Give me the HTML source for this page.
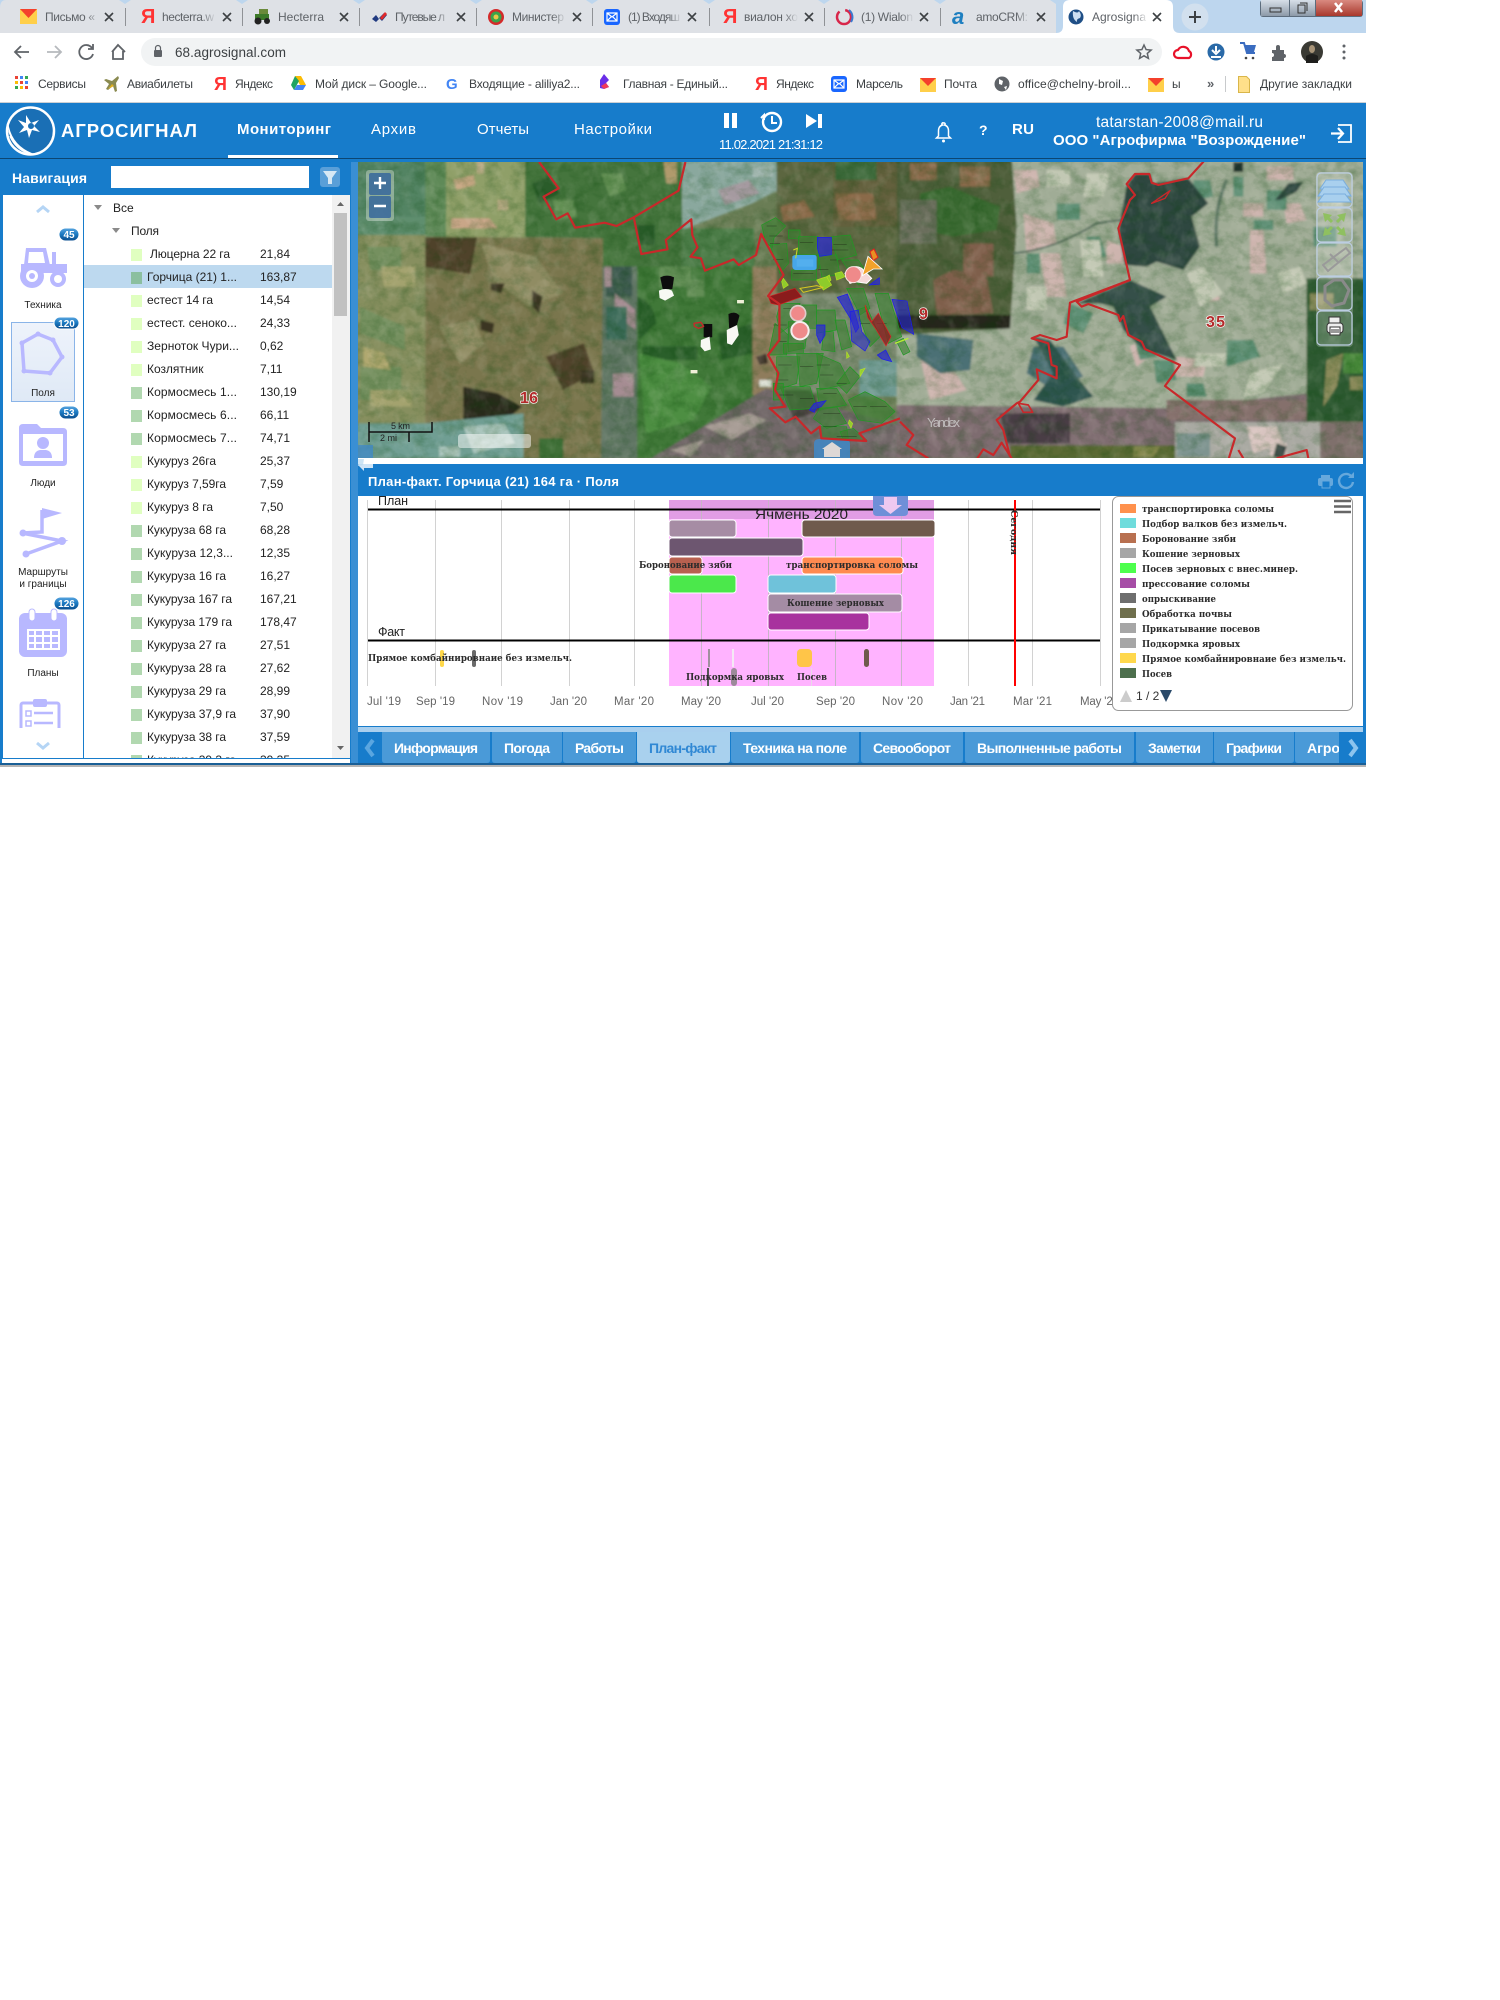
<!DOCTYPE html>
<html lang="ru"><head><meta charset="utf-8"><title>Agrosignal</title>
<style>
html,body{margin:0;padding:0;background:#fff;width:1500px;height:2000px;overflow:hidden}
svg{display:block}
text{font-family:"Liberation Sans","DejaVu Sans",sans-serif;white-space:pre}
.tb{font-size:12px;fill:#5f6368}.bm{font-size:12px;fill:#3c4043}
.nav{font-size:15px;fill:#fff}
.tr{font-size:12px;fill:#222}
.sb{font-size:10px;fill:#222;text-anchor:middle}
.bd{font-size:10px;font-weight:bold;fill:#fff;text-anchor:middle}
.ch{font-family:"DejaVu Serif","Liberation Serif",serif;font-weight:bold;font-size:9.5px;fill:#2b2b2b}
.ax{font-size:11.5px;fill:#666}
.tab{font-size:14px;font-weight:bold;fill:#fff}
.ml{font-family:"Liberation Sans",sans-serif;font-weight:bold;fill:#b32a2a;stroke:#fff;stroke-width:1.3px;paint-order:stroke}
</style></head><body>
<svg xmlns="http://www.w3.org/2000/svg" width="1500" height="2000" viewBox="0 0 1500 2000">
<defs>
<linearGradient id="f1"><stop offset="0" stop-color="#dee1e6" stop-opacity="0"/><stop offset="1" stop-color="#dee1e6"/></linearGradient>
<linearGradient id="f2"><stop offset="0" stop-color="#fff" stop-opacity="0"/><stop offset="1" stop-color="#fff"/></linearGradient>
<linearGradient id="wb" x1="0" y1="0" x2="0" y2="1"><stop offset="0" stop-color="#d7dfe8"/><stop offset="1" stop-color="#8d9aa8"/></linearGradient>
<linearGradient id="wr" x1="0" y1="0" x2="0" y2="1"><stop offset="0" stop-color="#d98a80"/><stop offset="1" stop-color="#a8382c"/></linearGradient>
<linearGradient id="badge" x1="0" y1="0" x2="0" y2="1"><stop offset="0" stop-color="#5aa6e0"/><stop offset=".5" stop-color="#1a78c0"/><stop offset="1" stop-color="#0a4a8a"/></linearGradient>
<linearGradient id="sel" x1="0" y1="0" x2="0" y2="1"><stop offset="0" stop-color="#eef3fb"/><stop offset="1" stop-color="#dfe9f6"/></linearGradient>
<clipPath id="mapc"><rect x="358" y="162" width="1005" height="296"/></clipPath>
<clipPath id="treec"><rect x="84" y="195" width="248" height="563"/></clipPath>
<clipPath id="sidec"><rect x="3" y="195" width="80" height="533"/></clipPath>
<clipPath id="agro"><rect x="1295" y="732" width="44" height="31"/></clipPath>
<filter id="bl" x="-2%" y="-2%" width="104%" height="104%"><feGaussianBlur stdDeviation="1"/></filter>
<filter id="bs"><feGaussianBlur stdDeviation=".4"/></filter>
<filter id="nd" x="0" y="0" width="100%" height="100%"><feTurbulence type="fractalNoise" baseFrequency=".07 .09" numOctaves="4" seed="7"/><feColorMatrix values="0 0 0 0 0 0 0 0 0 .05 0 0 0 0 0 1.8 0 0 0 -.72"/></filter>
<filter id="nl" x="0" y="0" width="100%" height="100%"><feTurbulence type="fractalNoise" baseFrequency=".08 .06" numOctaves="3" seed="21"/><feColorMatrix values="0 0 0 0 1 0 0 0 0 .92 0 0 0 0 .85 1.9 0 0 0 -.85"/></filter>
</defs>

<rect width="1500" height="2000" fill="#fff"/>

<!-- Chrome title + tab strip -->
<rect width="1366" height="33" fill="#bdd6ee"/>
<rect x="0" y="0" width="1056" height="33" fill="#dee1e6"/>
<path d="M0 0h6q-6 0-6 8z" fill="#bdd6ee"/>
<g fill="#bdd6ee"><path d="M119 0h12l-6 4zM236 0h12l-6 4zM353 0h12l-6 4zM470 0h12l-6 4zM586 0h12l-6 4zM703 0h12l-6 4zM818 0h12l-6 4zM934 0h12l-6 4zM1050 0h12l-6 4z"/></g>
<path d="M1056 33q7 0 7-7V7q0-7 7-7h96q7 0 7 7v19q0 7 7 7z" fill="#fff"/>
<g stroke="#8f9296" stroke-width="1"><path d="M125.500 8v18M242.500 8v18M359.500 8v18M476.500 8v18M592.500 8v18M709.500 8v18M824.500 8v18M940.500 8v18"/></g>
<circle cx="1195" cy="17" r="13.500" fill="#d2e0ee"/>
<path d="M1195 11v12M1189 17h12" stroke="#3c4043" stroke-width="2"/>
<!-- tab icons -->
<rect x="20" y="9" width="17" height="15" fill="#ffcf4a"/><path d="M20 9h17l-8.500 9z" fill="#f4402c"/>
<text x="141" y="23" font-size="20" fill="#f33" font-weight="bold">Я</text>
<g><rect x="259" y="9" width="9" height="7" fill="#6a8a3a"/><rect x="255" y="14" width="14" height="6" fill="#3d7a2a"/><circle cx="258" cy="21" r="3.500" fill="#222"/><circle cx="267" cy="21" r="3" fill="#222"/></g>
<path d="M372 19l4-4 3 4-3 3zM379 18l5-5 3 2-5 6z" fill="#203a80"/><path d="M380 18l5-6 2 2-5 6z" fill="#e22a2a"/>
<circle cx="496" cy="17" r="8" fill="#d42a2a"/><circle cx="496" cy="17" r="5.500" fill="#3aa34a"/><circle cx="496" cy="17" r="2.500" fill="#e6c84a"/>
<rect x="604" y="9" width="16" height="16" rx="3" fill="#1966ff"/><path d="M607 13h10v8h-10zM607 13l5 4 5-4M607 21l4-4M617 21l-4-4" fill="none" stroke="#fff" stroke-width="1.200"/>
<text x="723" y="23" font-size="20" fill="#f33" font-weight="bold">Я</text>
<circle cx="844" cy="17" r="7" fill="none" stroke="#d8264a" stroke-width="2.500" stroke-dasharray="28 6"/><path d="M849 10a9 9 0 0 1 2 12" stroke="#3a7ad0" stroke-width="2" fill="none"/>
<text x="952" y="24" font-size="22" fill="#1e7fc0" font-weight="bold" font-style="italic" font-family="Liberation Serif">a</text>
<circle cx="1076" cy="17" r="7.500" fill="#1f4f86"/><path d="M1073 11q5 3 6 0 3 4 1 7-4 1-3 4-5-3-4-11z" fill="#cfe0f2"/>
<!-- tab text -->
<g class="tb">
<text x="45" y="21" textLength="50">Письмо «</text>
<text x="162" y="21" textLength="52">hecterra.w</text>
<text x="278" y="21" textLength="46">Hecterra</text>
<text x="395" y="21" textLength="50">Путевые л</text>
<text x="512" y="21" textLength="52">Министер</text>
<text x="628" y="21" textLength="52">(1) Входяш</text>
<text x="744" y="21" textLength="54">виалон хо</text>
<text x="861" y="21" textLength="52">(1) Wialon</text>
<text x="976" y="21" textLength="52">amoCRM:</text>
<text x="1092" y="21" textLength="54">Agrosigna</text>
</g>
<g fill="url(#f1)"><rect x="86" y="8" width="14" height="18"/><rect x="202" y="8" width="14" height="18"/><rect x="436" y="8" width="14" height="18"/><rect x="552" y="8" width="14" height="18"/><rect x="668" y="8" width="14" height="18"/><rect x="784" y="8" width="14" height="18"/><rect x="900" y="8" width="14" height="18"/><rect x="1016" y="8" width="14" height="18"/></g>
<rect x="1134" y="8" width="14" height="18" fill="url(#f2)"/>
<g stroke="#3c4043" stroke-width="1.600" fill="none"><path d="M105 13l8 8M113 13l-8 8M223 13l8 8M231 13l-8 8M340 13l8 8M348 13l-8 8M457 13l8 8M465 13l-8 8M573 13l8 8M581 13l-8 8M688 13l8 8M696 13l-8 8M805 13l8 8M813 13l-8 8M920 13l8 8M928 13l-8 8M1037 13l8 8M1045 13l-8 8M1153 13l8 8M1161 13l-8 8"/></g>
<!-- window buttons -->
<rect x="1260" y="0" width="103" height="17" rx="3" fill="#5c6c7c"/>
<rect x="1261" y="0" width="28" height="16" fill="url(#wb)"/><rect x="1290" y="0" width="25" height="16" fill="url(#wb)"/><rect x="1316" y="0" width="46" height="16" fill="url(#wr)"/>
<rect x="1270" y="8" width="11" height="4" fill="none" stroke="#333" stroke-width="1"/>
<path d="M1298 5h7v8h-7zM1300 3h7v8" fill="none" stroke="#333" stroke-width="1"/>
<path d="M1335 3l7 9M1342 3l-7 9" stroke="#fff" stroke-width="2.500"/>

<!-- Toolbar -->
<rect x="141" y="38" width="1021" height="28" rx="14" fill="#f1f3f4"/>
<g stroke="#5f6368" stroke-width="1.800" fill="none">
<path d="M29 52H15M21 46l-6 6 6 6"/>
<path d="M47 52h14M55 46l6 6-6 6" stroke="#b6b9bd"/>
<path d="M92 48a7 7 0 1 0 1 6M93 44v5h-5"/>
<path d="M112 52l6-7 7 7M113 51v8h10v-8"/>
</g>
<rect x="154" y="50" width="8" height="7" rx="1" fill="#5f6368"/><path d="M155.500 50v-2a2.500 2.500 0 0 1 5 0v2" fill="none" stroke="#5f6368" stroke-width="1.200"/>
<text x="175" y="57" font-size="13.500" fill="#3c4043" textLength="111">68.agrosignal.com</text>
<path d="M1144 45l2.100 4.600 5 .5-3.800 3.300 1.100 5-4.400-2.600-4.400 2.600 1.100-5-3.800-3.300 5-.5z" fill="none" stroke="#5f6368" stroke-width="1.500"/>
<path d="M1178 58a4 4 0 0 1 0-8 6 6 0 0 1 11 1 4 4 0 0 1 0 7z" fill="none" stroke="#e8122a" stroke-width="2.200"/>
<circle cx="1216" cy="52" r="8.500" fill="#2a6aa8"/><path d="M1216 46v6M1212 50l4 4 4-4M1211 57h10" stroke="#fff" stroke-width="2" fill="none"/>
<path d="M1240 43h4l3 10h8" stroke="#3a6cc0" stroke-width="2" fill="none"/><path d="M1244 45h12l-2 7h-8z" fill="#3a6cc0"/><circle cx="1246" cy="58" r="1.300" fill="#444"/><circle cx="1253" cy="58" r="1.300" fill="#444"/>
<path d="M1272 50h4v-3a2 2 0 0 1 4 0v3h4v4a2 2 0 0 1 0 4v3h-12v-4a2 2 0 0 0 0-4z" fill="#5f6368"/>
<ellipse cx="1312" cy="52" rx="11" ry="11" fill="#3a3a34"/><ellipse cx="1312" cy="49" rx="3" ry="4" fill="#a89478"/><path d="M1306 63v-7q6-4 12 0v7z" fill="#1e1e1c"/>
<g fill="#5f6368"><circle cx="1344" cy="46" r="1.500"/><circle cx="1344" cy="52" r="1.500"/><circle cx="1344" cy="58" r="1.500"/></g>

<!-- Bookmarks -->
<g>
<g><rect x="15" y="76" width="3" height="3" fill="#ea4335"/><rect x="20" y="76" width="3" height="3" fill="#4285f4"/><rect x="25" y="76" width="3" height="3" fill="#34a853"/><rect x="15" y="81" width="3" height="3" fill="#fbbc05"/><rect x="20" y="81" width="3" height="3" fill="#ea4335"/><rect x="25" y="81" width="3" height="3" fill="#4285f4"/><rect x="15" y="86" width="3" height="3" fill="#34a853"/><rect x="20" y="86" width="3" height="3" fill="#fbbc05"/><rect x="25" y="86" width="3" height="3" fill="#ea4335"/></g>
<text class="bm" x="38" y="88" textLength="48">Сервисы</text>
<path d="M118 76l-6 5-6-2-2 1 5 4-3 5 2 1 5-4 2 6 2-1-1-8 3-5z" fill="#8a8a50"/><path d="M108 89l4-5 2 2z" fill="#e0b020"/>
<text class="bm" x="127" y="88" textLength="66">Авиабилеты</text>
<text x="214" y="90" font-size="18" fill="#f33" font-weight="bold">Я</text>
<text class="bm" x="235" y="88" textLength="38">Яндекс</text>
<path d="M295 76h6l5 9h-6z" fill="#fbbc05"/><path d="M295 76l-4 9 3 5 5-9z" fill="#1fa463"/><path d="M294 90h9l3-5h-9z" fill="#4285f4"/>
<text class="bm" x="315" y="88" textLength="112">Мой диск – Google...</text>
<text x="446" y="89" font-size="15" font-weight="bold" fill="#4285f4">G</text>
<text class="bm" x="469" y="88" textLength="111">Входящие - aliliya2...</text>
<path d="M604 74l5 6-3 3 3 4-5 2-4-1v-8z" fill="#6a2ee8"/><path d="M601 86l5-3 3 4-5 2z" fill="#f03a5a"/>
<text class="bm" x="623" y="88" textLength="105">Главная - Единый...</text>
<text x="755" y="90" font-size="18" fill="#f33" font-weight="bold">Я</text>
<text class="bm" x="776" y="88" textLength="38">Яндекс</text>
<rect x="831" y="76" width="16" height="16" rx="3" fill="#1966ff"/><path d="M834 80h10v8h-10zM834 80l5 4 5-4M834 88l4-4M844 88l-4-4" fill="none" stroke="#fff" stroke-width="1.200"/>
<text class="bm" x="856" y="88" textLength="47">Марсель</text>
<rect x="920" y="78" width="16" height="14" fill="#ffcf4a"/><path d="M920 78h16l-8 8z" fill="#f4402c"/>
<text class="bm" x="944" y="88" textLength="33">Почта</text>
<circle cx="1002" cy="84" r="7.500" fill="#5f6368"/><path d="M999 79l4 2-1 4-3-1zM1004 87l3-1-1 4z" fill="#fff"/>
<text class="bm" x="1018" y="88" textLength="113">office@chelny-broil...</text>
<rect x="1148" y="78" width="16" height="14" fill="#ffcf4a"/><path d="M1148 78h16l-8 8z" fill="#f4402c"/>
<text class="bm" x="1172" y="88" textLength="8">ы</text>
<text x="1207" y="88" font-size="13" font-weight="bold" fill="#5f6368">»</text>
<rect x="1225" y="76" width="1" height="16" fill="#c8cacc"/>
<path d="M1238.500 76.500h8l3 3v13h-11z" fill="#ffe08a" stroke="#d9b64a"/>
<text class="bm" x="1260" y="88" textLength="92">Другие закладки</text>
</g>
<rect y="102" width="1366" height="1" fill="#ccd0d4"/>

<!-- App blue base -->
<rect x="0" y="103" width="1366" height="662" fill="#177ccb"/>
<rect x="0" y="158" width="1366" height="1" fill="#0c4672"/>
<!-- logo -->
<circle cx="30.500" cy="131" r="23.500" fill="#1a6fb5" stroke="#fff" stroke-width="2.500"/>
<path d="M8 126q4 20 24 28M10 136q6 13 18 17M9 131q5 16 21 23" stroke="#fff" stroke-width="1.600" fill="none"/>
<path d="M26 115l5 8 8-3-5 6 6 6-8-2-3 8-2-8-8 3 5-6-6-7 8 3z" fill="#fff"/><circle cx="31" cy="126" r="3" fill="#1a6fb5"/>
<text x="61" y="137" font-size="18.500" font-weight="bold" fill="#fff" textLength="136">АГРОСИГНАЛ</text>
<text class="nav" x="237" y="134" font-weight="bold" textLength="94">Мониторинг</text>
<rect x="228" y="155" width="110" height="3" fill="#fff"/>
<text class="nav" x="371" y="134" textLength="45">Архив</text>
<text class="nav" x="477" y="134" textLength="52">Отчеты</text>
<text class="nav" x="574" y="134" textLength="78">Настройки</text>
<!-- player -->
<rect x="724" y="113" width="5" height="15" fill="#fff"/><rect x="732" y="113" width="5" height="15" fill="#fff"/>
<circle cx="772" cy="122" r="9" fill="none" stroke="#fff" stroke-width="2.400"/><path d="M772 116v7h5M761 118l3-3v5" stroke="#fff" stroke-width="2" fill="none"/>
<path d="M806 114l11 7-11 7z" fill="#fff"/><rect x="818" y="114" width="4" height="14" fill="#fff"/>
<text x="719" y="149" font-size="13" fill="#fff" textLength="104">11.02.2021 21:31:12</text>
<path d="M943.500 123a1 1 0 0 1 1 2q4 1 4 6v5l2 2h-14l2-2v-5q0-5 4-6a1 1 0 0 1 1-2z" fill="none" stroke="#fff" stroke-width="1.500"/><circle cx="943.500" cy="141" r="1.500" fill="#fff"/>
<text x="979" y="135" font-size="14" font-weight="bold" fill="#fff">?</text>
<text x="1012" y="134" font-size="15" font-weight="bold" fill="#fff" textLength="22">RU</text>
<text x="1096" y="127" font-size="15.500" fill="#fff" textLength="167">tatarstan-2008@mail.ru</text>
<text x="1053" y="145" font-size="15" font-weight="bold" fill="#fff" textLength="253">ООО "Агрофирма "Возрождение"</text>
<path d="M1338 125h13v17h-13" fill="none" stroke="#fff" stroke-width="1.800"/><path d="M1331 133.500h11M1338 128l5 5.500-5 5.500" fill="none" stroke="#fff" stroke-width="2.200"/>

<!-- Sidebar -->
<text x="12" y="183" font-size="14" font-weight="bold" fill="#fff" textLength="75">Навигация</text>
<rect x="111" y="166" width="198" height="22" fill="#fff"/>
<rect x="320" y="167" width="20" height="20" rx="3" fill="#5a9fd8"/><path d="M323 171h14l-5 7v6h-4v-6z" fill="#d8e8f4"/>
<rect x="3" y="195" width="347" height="563" fill="#fff"/>
<rect x="83" y="195" width="1" height="563" fill="#177ccb"/>
<rect x="351" y="162" width="7" height="603" fill="#3a8fd4"/>
<rect x="3" y="758" width="347" height="1" fill="#177ccb"/>
<rect x="2" y="759" width="348" height="5" fill="#fff"/>

<path d="M37 212l6-5 6 5" fill="none" stroke="#b5d5f5" stroke-width="3"/>
<g clip-path="url(#sidec)">
<!-- tractor -->
<g fill="#b8b8ff">
<path d="M26 248h20l4 17h-26z"/><rect x="52" y="252" width="4" height="14"/>
<path d="M21 264h46v9H21z"/>
</g>
<path d="M29 252h14l2 11H28z" fill="#fff"/>
<circle cx="32" cy="276" r="12" fill="#b8b8ff"/><circle cx="32" cy="276" r="6" fill="#fff"/><circle cx="32" cy="276" r="3" fill="#b8b8ff"/>
<circle cx="58" cy="279" r="8" fill="#b8b8ff"/><circle cx="58" cy="279" r="4" fill="#fff"/>
<text class="sb" x="43" y="308">Техника</text>
<!-- fields -->
<rect x="11.500" y="322.500" width="63" height="79" fill="url(#sel)" stroke="#8ab4e8"/>
<path d="M22 343l16-9 15 6 9 17-12 16-26-2z" fill="none" stroke="#b8b8ff" stroke-width="3.500"/>
<g fill="#b8b8ff"><circle cx="22" cy="343" r="2.500"/><circle cx="38" cy="334" r="2.500"/><circle cx="53" cy="340" r="2.500"/><circle cx="62" cy="357" r="2.500"/><circle cx="50" cy="373" r="2.500"/><circle cx="24" cy="371" r="2.500"/></g>
<text class="sb" x="43" y="396">Поля</text>
<!-- people -->
<path d="M19 428q0-4 4-4h14l4 4h22q4 0 4 4v30q0 4-4 4H23q-4 0-4-4z" fill="#b8b8ff"/>
<path d="M23 434h40v27H23z" fill="#fff"/>
<circle cx="43" cy="443" r="6" fill="#b8b8ff"/><path d="M34 458q0-7 6-8h6q6 1 6 8z" fill="#b8b8ff"/>
<text class="sb" x="43" y="486">Люди</text>
<!-- routes -->
<path d="M42 510v22L22 533l40 8-36 13" fill="none" stroke="#b8b8ff" stroke-width="3.500"/>
<path d="M42 508l20 5-20 6z" fill="#b8b8ff"/>
<circle cx="23" cy="533" r="3.500" fill="#b8b8ff"/><circle cx="62" cy="541" r="4" fill="#b8b8ff"/><circle cx="26" cy="554" r="3.500" fill="#b8b8ff"/>
<text class="sb" x="43" y="575">Маршруты</text>
<text class="sb" x="43" y="587">и границы</text>
<!-- calendar -->
<rect x="19" y="613" width="48" height="44" rx="6" fill="#b8b8ff"/>
<rect x="29" y="609" width="6" height="12" rx="3" fill="#fff" stroke="#b8b8ff"/><rect x="51" y="609" width="6" height="12" rx="3" fill="#fff" stroke="#b8b8ff"/>
<path d="M28 630h31v19H28z M28 636h31M28 643h31M35 630v19M43 630v19M51 630v19" fill="none" stroke="#fff" stroke-width="2"/>
<text class="sb" x="43" y="676">Планы</text>
<!-- clipboard -->
<rect x="21" y="703" width="38" height="30" rx="2" fill="none" stroke="#b8b8ff" stroke-width="3"/><rect x="33" y="699" width="14" height="8" rx="2" fill="#b8b8ff"/>
<path d="M26 711h5v5h-5zM26 721h5v5h-5z" fill="none" stroke="#b8b8ff" stroke-width="1.500"/><path d="M34 713h19M34 723h19" stroke="#b8b8ff" stroke-width="2.500"/>
</g>
<path d="M37 743l6 5 6-5" fill="none" stroke="#b5d5f5" stroke-width="3"/>
<!-- badges -->
<g>
<rect x="59" y="228" width="20" height="13" rx="6.500" fill="url(#badge)" stroke="#fff"/><text class="bd" x="69" y="238">45</text>
<rect x="54" y="317" width="25" height="12" rx="6" fill="url(#badge)" stroke="#fff"/><text class="bd" x="66.500" y="327">120</text>
<rect x="59" y="406" width="20" height="13" rx="6.500" fill="url(#badge)" stroke="#fff"/><text class="bd" x="69" y="416">53</text>
<rect x="54" y="597" width="25" height="13" rx="6.500" fill="url(#badge)" stroke="#fff"/><text class="bd" x="66.500" y="607">126</text>
</g>

<!-- Tree -->
<rect x="84" y="265" width="248" height="23" fill="#bdd9ef"/>
<path d="M94 205h8l-4 5z M112 228h8l-4 5z" fill="#8a8a8a"/>
<rect x="332" y="195" width="18" height="563" fill="#f1f1f1"/>
<rect x="334" y="213" width="13" height="103" fill="#c1c1c1"/>
<path d="M337 206l3.500-4 3.500 4z M337 746l3.500 4 3.500-4z" fill="#666"/>
<g clip-path="url(#treec)">
<g class="tr">
<text x="113" y="212">Все</text><text x="131" y="235" textLength="28">Поля</text>
<text x="150" y="258" textLength="80">Люцерна 22 га</text><text x="260" y="258">21,84</text>
<text x="147" y="281" textLength="90">Горчица (21) 1...</text><text x="260" y="281">163,87</text>
<text x="147" y="304" textLength="66">естест 14 га</text><text x="260" y="304">14,54</text>
<text x="147" y="327" textLength="90">естест. сеноко...</text><text x="260" y="327">24,33</text>
<text x="147" y="350" textLength="92">Зерноток Чури...</text><text x="260" y="350">0,62</text>
<text x="147" y="373">Козлятник</text><text x="260" y="373">7,11</text>
<text x="147" y="396" textLength="90">Кормосмесь 1...</text><text x="260" y="396">130,19</text>
<text x="147" y="419" textLength="90">Кормосмесь 6...</text><text x="260" y="419">66,11</text>
<text x="147" y="442" textLength="90">Кормосмесь 7...</text><text x="260" y="442">74,71</text>
<text x="147" y="465" textLength="69">Кукуруз 26га</text><text x="260" y="465">25,37</text>
<text x="147" y="488" textLength="79">Кукуруз 7,59га</text><text x="260" y="488">7,59</text>
<text x="147" y="511" textLength="66">Кукуруз 8 га</text><text x="260" y="511">7,50</text>
<text x="147" y="534" textLength="79">Кукуруза 68 га</text><text x="260" y="534">68,28</text>
<text x="147" y="557" textLength="86">Кукуруза 12,3...</text><text x="260" y="557">12,35</text>
<text x="147" y="580" textLength="79">Кукуруза 16 га</text><text x="260" y="580">16,27</text>
<text x="147" y="603" textLength="85">Кукуруза 167 га</text><text x="260" y="603">167,21</text>
<text x="147" y="626" textLength="85">Кукуруза 179 га</text><text x="260" y="626">178,47</text>
<text x="147" y="649" textLength="79">Кукуруза 27 га</text><text x="260" y="649">27,51</text>
<text x="147" y="672" textLength="79">Кукуруза 28 га</text><text x="260" y="672">27,62</text>
<text x="147" y="695" textLength="79">Кукуруза 29 га</text><text x="260" y="695">28,99</text>
<text x="147" y="718" textLength="89">Кукуруза 37,9 га</text><text x="260" y="718">37,90</text>
<text x="147" y="741" textLength="79">Кукуруза 38 га</text><text x="260" y="741">37,59</text>
<text x="147" y="764" textLength="89">Кукуруза 39,3 га</text><text x="260" y="764">39,35</text>
</g>
<g fill="#e0ffc0"><rect x="131" y="249" width="11" height="12"/><rect x="131" y="295" width="11" height="12"/><rect x="131" y="318" width="11" height="12"/><rect x="131" y="341" width="11" height="12"/><rect x="131" y="364" width="11" height="12"/><rect x="131" y="456" width="11" height="12"/><rect x="131" y="479" width="11" height="12"/><rect x="131" y="502" width="11" height="12"/></g>
<rect x="131" y="272" width="11" height="12" fill="#8bbf9f"/>
<g fill="#b1d8b0"><rect x="131" y="387" width="11" height="12"/><rect x="131" y="410" width="11" height="12"/><rect x="131" y="433" width="11" height="12"/><rect x="131" y="525" width="11" height="12"/><rect x="131" y="548" width="11" height="12"/><rect x="131" y="571" width="11" height="12"/><rect x="131" y="594" width="11" height="12"/><rect x="131" y="617" width="11" height="12"/><rect x="131" y="640" width="11" height="12"/><rect x="131" y="663" width="11" height="12"/><rect x="131" y="686" width="11" height="12"/><rect x="131" y="709" width="11" height="12"/><rect x="131" y="732" width="11" height="12"/><rect x="131" y="755" width="11" height="12"/></g>
</g>

<!-- MAP -->
<g clip-path="url(#mapc)">
<rect x="358" y="162" width="1005" height="296" fill="#6a7d55"/>
<g filter="url(#bl)">
<g transform="translate(360 160) scale(.34435 .33333)">
<rect x="-10" y="0" width="200" height="230" fill="#528464"/>
<rect x="-10" y="170" width="200" height="60" fill="#5e8e6e"/>
<rect x="190" y="0" width="290" height="232" fill="#8f9f68"/>
<rect x="190" y="0" width="60" height="232" fill="#5e8a58"/>
<path d="M270 60l60-15 5 30-55 15z" fill="#c8a884"/><path d="M265 175h110l25 30H265z" fill="#c9a688"/><path d="M340 0h20v40h-20zM400 120h30v30h-30z" fill="#c0ae88"/>
<path d="M480 0H945V320H705V235L480 230z" fill="#44753c"/>
<path d="M500 70l50-20 30 50-60 30z" fill="#2c5c2a"/><path d="M700 40h60l15 50-50 20zM560 120h60l10 50-60 10z" fill="#628f52"/><path d="M805 195h50v60h-45z" fill="#2a5c2c"/><path d="M880 0h40v70h-30z" fill="#b09a6c"/>
<path d="M935 0H1215V90L1140 130 935 210z" fill="#8aa89e"/><path d="M1040 90l90-30 30 40-100 35z" fill="#a59aa0"/><rect x="1140" y="20" width="60" height="30" fill="#a9bcb8"/>
<rect x="935" y="205" width="210" height="120" fill="#4c7c46"/>
<rect x="-10" y="225" width="200" height="570" fill="#878f5e"/>
<path d="M0 440l130 60v70l-130-50zM20 260h100v70H30zM0 620h120v100H0z" fill="#75905e"/><path d="M10 560l60 20 20 50-80-10z" fill="#b0a870"/><path d="M60 320h100v60H70zM30 690h120v50H30z" fill="#a3a26e"/>
<path d="M190 230L705 235V895H475V760L190 790z" fill="#7a764e"/>
<path d="M190 232h150l-20 110-130-20zM540 590l110-40 30 90-90 50z" fill="#4f432b"/>
<path d="M300 680l100 20 70 40-40 35-130 10z" fill="#2c2a1c"/>
<path d="M350 250l160 40 80 110-100 40-100-80zM230 500l100-20 30 70-70 60z" fill="#908c63"/>
<path d="M350 480l40 10-5 30-35-10zM380 370h40l-10 30-30-10zM500 390l30 20-10 50-20-20zM640 630h40v40h-40z" fill="#3a3620"/>
<path d="M705 320h100v575H700z" fill="#5f7464"/><path d="M715 320h75v90h-75z" fill="#3c5a50"/><path d="M740 400l60 50v60l-60-50zM735 640h60v70h-60zM710 320h20v60h-20z" fill="#a58c92"/><path d="M715 440h60v100h-60z" fill="#3e6c5a"/>
<path d="M805 320H1145V720L850 895H805z" fill="#407838"/><path d="M805 410q50 20 55 80l-50 50zM1040 520l100-30v90l-90 20zM820 560h160v40H820z" fill="#2a5e2c"/><path d="M810 580l120 30 90 70-50 100-140 40z" fill="#4e8e42"/><path d="M870 320h90v60h-90zM950 360h50v50h-50z" fill="#628e54"/>
<path d="M1150 590l30-10 5 30-25 5z" fill="#3a3028"/>
<rect x="1140" y="320" width="75" height="385" fill="#8f7b5c"/>
<path d="M1150 590l30-10 5 30-25 5z" fill="#3a3028"/><path d="M1160 660h35v20h-35z" fill="#ecebe4"/>
<rect x="1210" y="0" width="370" height="410" fill="#5c663f"/><path d="M1375 0h190v200h-190z" fill="#64603c"/><path d="M1380 100h110l10 80h-110zM1220 140l70-20 30 50-90 15z" fill="#8a6a48"/><path d="M1380 0h120v60h-120z" fill="#3c6a3a"/>
<rect x="1210" y="400" width="370" height="300" fill="#7c8a70"/>
<path d="M1450 600h130v110h-130z" fill="#6f9a92"/>
<path d="M845 895L1180 685 1580 800V895z" fill="#726769"/><path d="M1000 800l130-40 50 20-100 60zM900 870l100-30-40 50z" fill="#a39891"/><path d="M1230 690h80l30 60-80 30z" fill="#48423f"/>
<path d="M-10 790H190L475 760V895H-10z" fill="#6f9e93"/><path d="M300 800l120-10 30 60-120 30zM230 860h60v30h-60z" fill="#aac5bd"/><path d="M520 835h70v60h-70z" fill="#3f7038"/>
</g>
<g transform="translate(900 160)">
<g transform="scale(.33333)">
<path d="M-10 0H375L350 200 330 505-10 525z" fill="#505e3a"/>
<path d="M60 100l90-20 150 60-10 70-130 20-100-20z" fill="#3a6a30"/><path d="M0 120h110v130H0z" fill="#6b6e5c"/><path d="M100 360l60-30 100 20 20 110-170 5zM190 250h90v100h-90z" fill="#7f5f4c"/><path d="M30 10h80v50H30zM180 20h90v60h-90z" fill="#8a6a4c"/>
<rect x="-10" y="465" width="345" height="42" fill="#26261e"/>
<path d="M335 0H1395V355H1220V740L820 750 650 760 340 740-10 735V525L330 505 350 200z" fill="#a0ac96"/>
<g fill="#cdb4ae"><path d="M370 160l90 30 10 60-90 30zM420 280h60l20 130h-60zM1050 210h40l10 130h-50zM880 360h60l20 60-60 10zM1030 130h60v40h-60zM1100 20h80v40h-80zM690 560l60-40 20 50-60 50zM620 240l50 20 10 50-60 0zM60 590l100 40 40 60-110 30zM340 30h70l10 50-70 20zM830 590l90 10-10 50-90 0zM1150 130h50l20 50-60 10z"/></g>
<g fill="#5f9076"><path d="M380 280h40v60h-40zM510 430l70 30-30 60-60-30zM560 230h40l20 60-60 10zM1060 180h60v30h-60zM1000 50h30v60h-30zM1100 90h60v60h-60zM700 530h50l20 60-50 10zM980 540h80l20 50-100 30zM760 600h60l10 60-60 10zM860 670h50l10 40h-60zM470 130h70v50h-70zM880 60h50l10 50-60 10zM1240 200h70v60h-70z"/></g>
<g fill="#c2c8b4"><path d="M560 40h70l-20 70h-60zM440 30h70v50h-70zM860 340l50-20 60 80-70 40zM380 380h60v70h-60zM1130 340l70-20 20 50-70 30zM890 580h90l-10 40h-90zM1050 640l100-30-60 90-60 10zM540 240h60l10 110h-60zM1260 60h60l10 90h-60z"/></g>
<path d="M400 560h90l60 90-90 40-80-50zM50 520l170 20-10 90-90 10-70-50z" fill="#4c7074"/>
<path d="M-10 735L820 745 1220 700V790H825V858H330V895H-10z" fill="#7e6c70"/>
<path d="M300 760l210 0v90H320z" fill="#4a3e45"/><path d="M800 720h420v60H800z" fill="#85706c"/>
<path d="M330 856H825V895H330z" fill="#5c6a35"/><path d="M700 860h80l-20 30h-60z" fill="#8a8a50"/>
<path d="M825 786H1260V895H825z" fill="#a9a9a2"/><path d="M1040 800l90 0 20 50-90 30zM1110 850h50v40h-50z" fill="#d8c4c0"/><path d="M1130 850l30 10-10 35-30-5z" fill="#3a4a44"/><path d="M830 820h100v70H830z" fill="#7e9490"/>
<rect x="1260" y="786" width="135" height="110" fill="#7f6f6c"/>
<rect x="1220" y="355" width="175" height="430" fill="#2f5a30"/><path d="M1280 600l50-20-20 100-40 60zM1350 650h40v40h-40zM1230 400h70v50h-70z" fill="#8a8a5a"/><path d="M1330 580h60v60h-60z" fill="#4a8a3a"/>
<path d="M680 75l25-33 45 0 10 28 105-15 60 75-50 40 25 90-50 70-80-25-30 15-65-5-20-100z" fill="#2f4740"/>
<path d="M530 430l160-70 110 50-50 30 80 160-100-30-60-60-30-70-40-10z" fill="#34504a"/>
<path d="M400 530l50 10 80 110 50 60-90 30-90-20 60-80z" fill="#2f544f"/>
<path d="M1125 120l40-50 45-5-20 30-50 25z" fill="#2f4740"/><path d="M1000 6h30v30h-30z" fill="#1e302c"/>
<path d="M980 60q-40 90-30 200" stroke="#5f7868" stroke-width="10" fill="none"/><path d="M340 280q120-10 250-90l70-10" stroke="#4e6858" stroke-width="6" fill="none"/>
</g>
</g>
</g>
<rect x="358" y="162" width="1005" height="296" filter="url(#nd)" opacity=".3"/>
<rect x="358" y="162" width="1005" height="296" filter="url(#nl)" opacity=".16"/>

<!-- clouds -->
<g transform="translate(360 160) scale(.34435 .33333)" filter="url(#bs)">
<path d="M872 352q20-10 40 0l-5 35h-28z" fill="#0c0c0c"/><path d="M1070 462q20-10 32 5l-10 38h-20z" fill="#111"/><path d="M998 492h25v40h-25z" fill="#111"/>
<path d="M868 392q20-10 38 0l6 15-26 15-16-8z M990 540l25-10 4 38-18 6-12-14z M1065 510l30-15 5 30-20 30-14-5z" fill="#f8f8f4"/><path d="M960 630h20v10h-20zM1095 420h20v10h-20z" fill="#f0f0d8"/>
</g>

<!-- fields cluster -->
<g transform="translate(760 210) scale(.33333)" filter="url(#bs)">
<g fill="#3c7f30" fill-opacity=".62" stroke="#1f9a22" stroke-width="2">
<path d="M5 45l42-22 30 25-35 35-5 30-20-15z"/><path d="M30 105l50-5 5 60-25 30z"/><path d="M85 60h35v25h-35z"/><path d="M115 80h60v55h-60z"/><path d="M215 80l55-5 20 60-60 15z"/><path d="M175 135h55l10 60-55 5z"/><path d="M105 135h70v40h-70z"/><path d="M95 180h75v30H95z"/>
<path d="M245 150h50l30 45-30 30z"/><path d="M260 235h50l20 60-30 20z"/><path d="M60 280h60l-5 50-55 40-10-50z"/><path d="M125 285h45v70h-40z"/><path d="M45 340l40 35-5 60-55 0z"/><path d="M85 335h60l-10 80-50 10z"/>
<path d="M170 300h55l5 60-60 10z"/><path d="M190 365h30l5 60-40-5z"/><path d="M225 330h30l20 80-30 10z"/><path d="M290 300l30-10 40 90-30 30z"/>
<path d="M345 250l40 0 40 130-40 20z"/><path d="M410 395l20-10 20 40-20 10z"/><path d="M50 440h70l-10 80-60 20z"/><path d="M110 430l80 0-20 90-50 10z"/><path d="M170 430l70 30 30 60-90 20z"/><path d="M60 530h90l20 65-80 5z"/><path d="M170 535h60l30 50-80 15z"/><path d="M270 470l30 30-40 50-30-30z"/>
<path d="M265 570l50-25 60 30 30 30-40 35-70-10z"/><path d="M180 595l50-5 30 50-60 15-40-30z"/><path d="M180 650l80 0 5 35-80 0z"/><path d="M240 665l40-10 40 35h-70z"/>
<path d="M70 400h60v30h-60zM40 520h30v50h-30z"/>
</g>
<g stroke="#111" stroke-width="1.200" opacity=".75"><path d="M20 48h30M28 78h40M30 100h30M40 148h30M120 98h40M220 104h40M215 120h50M210 150h20M175 178h30M100 190h60M70 295h40M40 345h40M50 395h30M55 465h40M55 510h30M50 555h50M120 470h40M170 465h40M180 495h40M230 520h30M190 550h40M120 565h40M280 590h40M330 590h50M190 610h50M190 650h40M230 680h60M300 340h30M350 340h30M415 300h25"/></g>
<g fill="#2a2ad0" fill-opacity=".72" stroke="#1a1af0" stroke-width="2"><path d="M172 82h42v52l-35 5-7-25z"/><path d="M232 262l30-10 20 50 15 50-10 15-15-40z"/><path d="M270 305l25-5 10 65 25 30-15 28-40-30z" fill-opacity=".55"/><path d="M170 345h25v30l-15 25-10-25z"/><path d="M396 268l45 5 20 100-35-20-15-40z" fill-opacity=".6"/><path d="M352 435l25-15 18 35-30-8z"/><path d="M148 600l15-20 35-8-15 18-15 5-5 12z"/><path d="M328 225l30-22v20z"/></g>
<path d="M97 140q3-5 10-5h55q8 0 8 8v30q0 7-8 7h-55q-8 0-10-10z" fill="#46a6ea"/><rect x="110" y="148" width="50" height="22" fill="#58b4f0" opacity=".7"/>
<path d="M25 260l80-25 20 25-70 25-22-5z" fill="#8a1c1e" stroke="#c22" stroke-width="2"/>
<path d="M315 285l20 50 20-25 38 70-15 28-30-50-25-35z" fill="#8a2020" fill-opacity=".8" stroke="#d22" stroke-width="2"/>
<g fill="#94d62a" stroke="#c0e820" stroke-width="2" opacity=".9"><path d="M70 205l15 20-15 10-5-20z"/><path d="M170 210l30-10 15 25-25 15z"/><path d="M200 200l8 15 5-5-5-15z"/><path d="M225 190l20-5 10 15-25 10z"/><path d="M260 425l8 15-8 5z"/><path d="M300 480l15-5-15 25z"/><path d="M268 630l10 10-5 15-8-15z"/></g>
<path d="M120 235l50-8 20 5-60 15z" fill="none" stroke="#d8c820" stroke-width="3"/>
<path d="M100 120l12-5-5 30" fill="none" stroke="#c8e020" stroke-width="3"/>
<path d="M405 400l40-15" stroke="#b8f030" stroke-width="4"/>
<path d="M330 125l12-8 12 25-15 10z" fill="#e89020" stroke="#d22" stroke-width="3"/>
<path d="M255 190q25-30 50-15l30 30-15 15-35-5-15 5z" fill="#f6d8d8" stroke="#fff" stroke-width="3"/>
<circle cx="280" cy="194" r="24" fill="#ef8a8a" stroke="#f8e4e4" stroke-width="3"/>
<circle cx="114" cy="310" r="23" fill="#ef8a8a" stroke="#e0cccc" stroke-width="5"/>
<circle cx="120" cy="362" r="26" fill="#ef8a8a" stroke="#f6eeee" stroke-width="6"/>
<path d="M307 197l17-58 42 38-26 0z" fill="#f2a22c" stroke="#fff" stroke-width="2.500"/>
</g>
<!-- home -->
<path d="M814 458v-14q0-5 5-5h26q5 0 5 5v14z" fill="#3f88c8" opacity=".85"/>
<path d="M822 449l10-7 10 7h-2v8h-16v-8z" fill="#ded8d6"/>

<!-- red borders -->
<g fill="none" stroke="#c8282a" stroke-linejoin="round">
<g transform="translate(360 160) scale(.34435 .33333)" stroke-width="6.500">
<path d="M520 6L577 85 533 110 570 178 603 160 625 203 710 188 745 198 795 172 925 92 945 6"/>
<path d="M795 172L817 282 893 268 888 240 962 178 965 225 980 262 960 290 990 295 1002 332 1085 298 1100 315 1150 285 1165 222 1230 345 1185 408 1218 432 1218 540 1185 585 1215 640 1205 690 1235 740 1190 745 1235 787 1265 770 1310 820 1335 800 1340 835 1470 843 1450 820 1568 775"/>
<path d="M970 490l20-3 8 12-15 6-12-6z" stroke-width="4"/>
</g>
<g transform="translate(900 160) scale(.33333)" stroke-width="6.500">
<path d="M0 785L40 825 20 855 85 895"/><path d="M232 895L250 868 280 885 305 848 335 895"/>
<path d="M915 0L865 55 775 75 755 68 748 42 705 42 680 72 705 105 690 120 655 205 690 360 510 428 500 530 470 540 420 525 395 535 445 550 455 615 470 620 470 655 410 628 415 660 360 725 350 730 290 780 310 810 330 890"/>
<path d="M355 730l30 5 13 22-28 0z" stroke-width="5"/>
<path d="M690 360L530 425 545 440 565 432 655 465 660 483 670 468 685 525 725 545 735 567 840 615 795 678 1005 835 985 900"/>
<path d="M755 130L810 92 795 115z" stroke-width="4"/><path d="M1015 870L1030 895M1130 895L1220 870 1225 895"/>
</g>
</g>

<!-- map labels -->
<text class="ml" x="520" y="403" font-size="16" textLength="18">16</text>
<text class="ml" x="919" y="319" font-size="16">9</text>
<text class="ml" x="1206" y="327" font-size="16" textLength="19">35</text>
<text x="927" y="427" font-size="13" fill="#dcdcdc" opacity=".7" textLength="33">Yandex</text>

<!-- scale -->
<path d="M369 422v20M369 432h63v-10M409 432v10" stroke="#111" stroke-width="1.500" fill="none"/>
<text x="391" y="429" font-size="9" fill="#222" textLength="19">5 km</text>
<text x="380" y="441" font-size="9" fill="#222" textLength="17">2 mi</text>
<rect x="458" y="434" width="73" height="14" rx="3" fill="#fff" opacity=".5"/>
<!-- zoom -->
<rect x="366" y="170" width="28" height="51" rx="3" fill="#fff" opacity=".35"/>
<rect x="369" y="173" width="22" height="22" rx="2" fill="#3c6b9b" opacity=".9"/><rect x="369" y="196" width="22" height="22" rx="2" fill="#3c6b9b" opacity=".9"/>
<path d="M374 183h12M380 177v12M374 206h12" stroke="#fff" stroke-width="2.400"/>
<!-- right tools -->
<rect x="1316" y="172" width="37" height="175" rx="4" fill="#fff" opacity=".22"/>
<g fill="none" stroke="#bccde2" stroke-width="1.200">
<rect x="1317" y="173" width="35" height="34" rx="4"/><rect x="1317" y="208" width="35" height="34" rx="4"/><rect x="1317" y="243" width="35" height="33" rx="4"/><rect x="1317" y="277" width="35" height="33" rx="4"/><rect x="1317" y="311" width="35" height="34" rx="4"/>
</g>
<g fill="#a9d0ee" stroke="#7aaede" stroke-width="1"><path d="M1326 180h17l6 9h-29z"/><path d="M1324 187h21l6 9h-33z"/><path d="M1324 194h21l6 8h-33z"/></g>
<g fill="#8fc060"><path d="M1323 213l9 2-7 7zM1346 213l-9 2 7 7zM1323 236l9-2-7-7zM1346 236l-9-2 7-7z"/><path d="M1326 216l6 6M1343 216l-6 6M1326 233l6-6M1343 233l-6-6" stroke="#8fc060" stroke-width="3"/></g>
<path d="M1323 265l23-17 4 5-22 18z M1330 254l8 8" fill="none" stroke="#9a9a9a" stroke-width="2"/>
<path d="M1325 300v-14l9-6h8l7 10-5 13-12 3z" fill="none" stroke="#8a8a8a" stroke-width="3"/>
<rect x="1327" y="323" width="16" height="10" rx="3" fill="#eee" stroke="#333"/><rect x="1329" y="317" width="11" height="6" fill="#eee" stroke="#333"/><path d="M1330 327h10v8h-10zM1331 330h8M1331 332h8" fill="#fff" stroke="#333" stroke-width="1"/>
<rect x="358" y="445" width="15" height="13" fill="#3f88c8" opacity=".75"/>
</g>
<path d="M358 465l6-6v3h9v6h-9v3z" fill="#cfe4f6"/>
<rect x="358" y="458" width="1005" height="6" fill="#fff"/>
<path d="M358 459l6 0-1 6-5 1z" fill="#b8d8f0" opacity=".7"/>

<!-- Panel header -->
<text x="368" y="486" font-size="13" font-weight="bold" fill="#fff" textLength="251">План-факт. Горчица (21) 164 га · Поля</text>
<path d="M1321 475h9v3h-9z" fill="#66a8dc"/><rect x="1318" y="478" width="15" height="8" rx="2" fill="#66a8dc"/><rect x="1322" y="481" width="8" height="7" fill="#177ccb" stroke="#66a8dc"/>
<path d="M1351 476a7 7 0 1 0 2 6" fill="none" stroke="#66a8dc" stroke-width="2.400"/><path d="M1354 472v6h-6z" fill="#66a8dc"/>

<!-- Chart -->
<rect x="358" y="496" width="1005" height="230" fill="#fff"/>
<rect x="669" y="500" width="265" height="186" fill="#ffb3ff"/>
<rect x="669" y="500" width="265" height="19" fill="#e19de5"/>
<g stroke="#d2d2d2" stroke-width="1"><path d="M367.500 500v186M435.500 500v186M501.500 500v186M569.500 500v186M634.500 500v186M968.500 500v186M1032.500 500v186M1100.500 500v186"/></g>
<g stroke="#c8b4c8" stroke-width="1"><path d="M701.500 500v186M768.500 500v186M835.500 500v186M901.500 500v186"/></g>
<path d="M368 509.500h732M368 640.500h732" stroke="#000" stroke-width="2"/>
<rect x="1014" y="500" width="2" height="186" fill="#f00"/>
<path d="M873 496h35v16q0 4-4 4h-27q-4 0-4-4z" fill="#6f8fd8"/><path d="M884 497h13v8h5l-11.500 9-11.500-9h5z" fill="#eec8f0"/>
<g stroke="#fff" stroke-width="1">
<rect x="669" y="520" width="67" height="17" rx="3" fill="#a68ca4"/>
<rect x="802" y="520" width="133" height="17" rx="3" fill="#6f5a4c"/>
<rect x="669" y="538" width="134" height="18" rx="3" fill="#6d5670"/>
<rect x="669" y="557" width="33" height="17" rx="3" fill="#b8604f"/>
<rect x="802" y="557" width="101" height="17" rx="3" fill="#ff8a50"/>
<rect x="669" y="575" width="67" height="18" rx="3" fill="#4be84b"/>
<rect x="768" y="575" width="68" height="18" rx="3" fill="#6fc2da"/>
<rect x="768" y="594" width="134" height="18" rx="3" fill="#a48ca4"/>
<rect x="768" y="613" width="101" height="17" rx="3" fill="#a8329e"/>
</g>
<rect x="440" y="650" width="4" height="17" rx="2" fill="#ffd84a"/>
<rect x="472" y="650" width="4" height="17" rx="2" fill="#6a6a6a"/>
<rect x="708" y="649" width="2" height="18" fill="#a0909e"/>
<rect x="732" y="649" width="2" height="18" fill="#f4e8f4"/>
<rect x="707" y="668" width="2" height="18" fill="#555"/>
<rect x="731" y="668" width="6" height="18" rx="3" fill="#9c8a9a"/>
<rect x="797" y="649" width="15" height="18" rx="4" fill="#ffc548"/>
<rect x="811" y="668" width="1" height="18" fill="#e8d8e8"/>
<rect x="864" y="649" width="5" height="18" rx="2.500" fill="#6f5a4c"/>
<text x="755" y="519" font-family="DejaVu Serif,Liberation Serif,serif" font-size="14" fill="#222" textLength="93" lengthAdjust="spacingAndGlyphs">Ячмень 2020</text>
<text x="378" y="505" font-size="12.500" fill="#222" textLength="30">План</text>
<text x="378" y="636" font-size="12.500" fill="#222" textLength="27">Факт</text>
<g class="ch">
<text class="ch" x="639" y="568" textLength="93" lengthAdjust="spacingAndGlyphs">Боронование зяби</text>
<text class="ch" x="786" y="568" textLength="132" lengthAdjust="spacingAndGlyphs">транспортировка соломы</text>
<text class="ch" x="787" y="606" textLength="97" lengthAdjust="spacingAndGlyphs">Кошение зерновых</text>
<text class="ch" x="368" y="661" textLength="204" lengthAdjust="spacingAndGlyphs">Прямое комбайнировнаие без измельч.</text>
<text class="ch" x="686" y="680" textLength="98" lengthAdjust="spacingAndGlyphs">Подкормка яровых</text>
<text class="ch" x="797" y="680" textLength="30" lengthAdjust="spacingAndGlyphs">Посев</text>
<text class="ch" transform="translate(1011 510) rotate(90)" x="0" y="0" textLength="45" lengthAdjust="spacingAndGlyphs">Сегодня</text>
</g>
<g class="ax">
<text class="ax" x="367" y="705" textLength="34">Jul '19</text><text class="ax" x="416" y="705" textLength="39">Sep '19</text><text class="ax" x="482" y="705" textLength="41">Nov '19</text><text class="ax" x="550" y="705" textLength="37">Jan '20</text><text class="ax" x="614" y="705" textLength="40">Mar '20</text><text class="ax" x="681" y="705" textLength="40">May '20</text><text class="ax" x="751" y="705" textLength="33">Jul '20</text><text class="ax" x="816" y="705" textLength="39">Sep '20</text><text class="ax" x="882" y="705" textLength="41">Nov '20</text><text class="ax" x="950" y="705" textLength="35">Jan '21</text><text class="ax" x="1013" y="705" textLength="39">Mar '21</text><text class="ax" x="1080" y="705" textLength="39">May '21</text>
</g>
<!-- Legend -->
<rect x="1112.500" y="496.500" width="240" height="214" rx="6" fill="#fff" stroke="#999"/>
<g>
<rect x="1120" y="504" width="16" height="9" fill="#ff914d"/><rect x="1120" y="518" width="16" height="10" fill="#6fdcdc"/><rect x="1120" y="533" width="16" height="10" fill="#b87050"/><rect x="1120" y="548" width="16" height="10" fill="#a6a6a6"/><rect x="1120" y="563" width="16" height="10" fill="#4dff4d"/><rect x="1120" y="578" width="16" height="10" fill="#a64da6"/><rect x="1120" y="593" width="16" height="10" fill="#6e6e6e"/><rect x="1120" y="608" width="16" height="10" fill="#6f6f4d"/><rect x="1120" y="623" width="16" height="10" fill="#a6a6a6"/><rect x="1120" y="638" width="16" height="10" fill="#a6a6a6"/><rect x="1120" y="653" width="16" height="10" fill="#ffd84d"/><rect x="1120" y="668" width="16" height="10" fill="#4d6f4d"/>
<text class="ch" x="1142" y="512" textLength="132" lengthAdjust="spacingAndGlyphs">транспортировка соломы</text>
<text class="ch" x="1142" y="527" textLength="145" lengthAdjust="spacingAndGlyphs">Подбор валков без измельч.</text>
<text class="ch" x="1142" y="542" textLength="94" lengthAdjust="spacingAndGlyphs">Боронование зяби</text>
<text class="ch" x="1142" y="557" textLength="98" lengthAdjust="spacingAndGlyphs">Кошение зерновых</text>
<text class="ch" x="1142" y="572" textLength="156" lengthAdjust="spacingAndGlyphs">Посев зерновых с внес.минер.</text>
<text class="ch" x="1142" y="587" textLength="108" lengthAdjust="spacingAndGlyphs">прессование соломы</text>
<text class="ch" x="1142" y="602" textLength="74" lengthAdjust="spacingAndGlyphs">опрыскивание</text>
<text class="ch" x="1142" y="617" textLength="90" lengthAdjust="spacingAndGlyphs">Обработка почвы</text>
<text class="ch" x="1142" y="632" textLength="118" lengthAdjust="spacingAndGlyphs">Прикатывание посевов</text>
<text class="ch" x="1142" y="647" textLength="98" lengthAdjust="spacingAndGlyphs">Подкормка яровых</text>
<text class="ch" x="1142" y="662" textLength="204" lengthAdjust="spacingAndGlyphs">Прямое комбайнировнаие без измельч.</text>
<text class="ch" x="1142" y="677" textLength="30" lengthAdjust="spacingAndGlyphs">Посев</text>
</g>
<path d="M1334 501h17M1334 506.500h17M1334 512h17" stroke="#666" stroke-width="2.400"/>
<path d="M1120 702l6-12 6 12z" fill="#ccc"/>
<text x="1136" y="700" font-size="12" fill="#333">1 / 2</text>
<path d="M1160 690h12l-6 12z" fill="#2a4a6a"/>

<!-- Tabs -->
<rect x="358" y="726" width="1005" height="1" fill="#177ccb"/>
<rect x="358" y="727" width="1005" height="5" fill="#a9cfee"/>
<rect x="358" y="732" width="1008" height="31" fill="#177ccb"/>
<g fill="#4a9ad8">
<path d="M382 732h108v28q0 3-3 3H385q-3 0-3-3z"/><path d="M492 732h70v28q0 3-3 3h-64q-3 0-3-3z"/><path d="M563 732h73v28q0 3-3 3h-67q-3 0-3-3z"/>
<path d="M731 732h128v28q0 3-3 3H734q-3 0-3-3z"/><path d="M861 732h102v28q0 3-3 3h-96q-3 0-3-3z"/><path d="M965 732h169v28q0 3-3 3H968q-3 0-3-3z"/><path d="M1136 732h77v28q0 3-3 3h-71q-3 0-3-3z"/><path d="M1214 732h80v28q0 3-3 3h-74q-3 0-3-3z"/><path d="M1295 732h44v31h-41q-3 0-3-3z"/>
</g>
<path d="M637 732h93v28q0 3-3 3h-87q-3 0-3-3z" fill="#a9d1ee"/>
<text class="tab" x="394" y="753" textLength="84">Информация</text>
<text class="tab" x="504" y="753" textLength="46">Погода</text>
<text class="tab" x="575" y="753" textLength="49">Работы</text>
<text class="tab" x="649" y="753" textLength="68" style="fill:#3088d4">План-факт</text>
<text class="tab" x="743" y="753" textLength="104">Техника на поле</text>
<text class="tab" x="873" y="753" textLength="78">Севооборот</text>
<text class="tab" x="977" y="753" textLength="145">Выполненные работы</text>
<text class="tab" x="1148" y="753" textLength="53">Заметки</text>
<text class="tab" x="1226" y="753" textLength="56">Графики</text>
<g clip-path="url(#agro)"><text class="tab" x="1307" y="753" textLength="60">Агроном</text></g>
<path d="M373 740l-6 8 6 8" fill="none" stroke="#5aa6e0" stroke-width="4"/>
<path d="M1350 740l6 8-6 8" fill="none" stroke="#8cc4ee" stroke-width="4"/>
<rect x="0" y="763" width="1366" height="2" fill="#1a5f96"/>
<rect x="0" y="765" width="1366" height="2" fill="#b4b4b4"/>
</svg>
</body></html>
